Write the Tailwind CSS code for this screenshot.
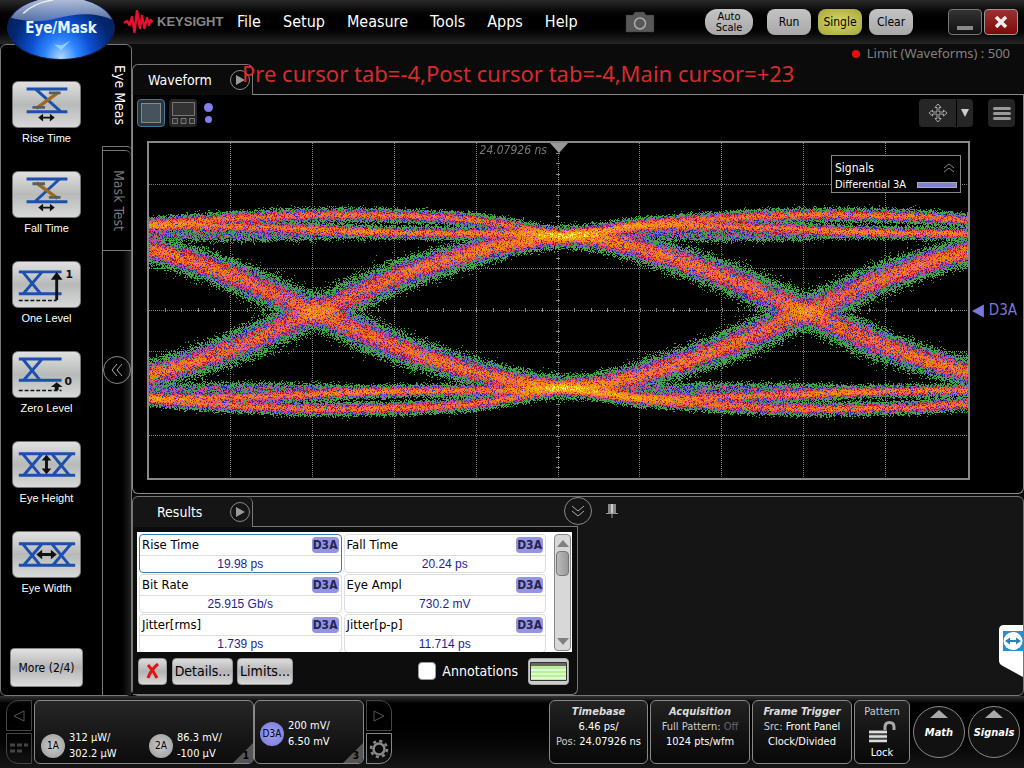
<!DOCTYPE html>
<html lang="en">
<head>
<meta charset="utf-8">
<meta name="viewport" content="width=device-width, initial-scale=1">
<title>Keysight Eye/Mask</title>
<script src="https://cdn.jsdelivr.net/npm/@tailwindcss/browser@4"></script>
</head>
<body class="relative flex min-h-screen flex-col overflow-hidden bg-[#0b0b0b] font-['DejaVu_Sans_Condensed','Noto_Sans',sans-serif] text-white">

<!-- Menu bar -->
<header class="flex h-11 shrink-0 items-center bg-linear-to-b from-[#2a2a2a] via-black to-[#262626] pr-1.5 pl-[123px]">
  <svg class="h-6 w-[30px]" viewBox="0 0 30 24" aria-hidden="true"><path d="M1 13L4 11L6.500 15L9 7L11.500 22L14 1L17 18L19 6L21.500 18L24 8L26 15L27.500 10L29.500 12" fill="none" stroke="#e5112f" stroke-width="2.500" stroke-linejoin="round"/></svg>
  <span class="ml-1 w-[76px] font-['Liberation_Sans',sans-serif] text-[13px] font-bold text-[#888]">KEYSIGHT</span>
  <nav class="ml-1 flex gap-[22px] text-base">
    <a href="#">File</a><a href="#">Setup</a><a href="#">Measure</a><a href="#">Tools</a><a href="#">Apps</a><a href="#">Help</a>
  </nav>
  <button class="ml-[47px]" aria-label="Screenshot"><svg class="h-6 w-[30px]" viewBox="0 0 30 24"><path d="M1 5h7l2-3h9l2 3h8v17H1z" fill="#585858" stroke="#333" stroke-dasharray="1 1"/><circle cx="15" cy="13.500" r="5.500" fill="none" stroke="#aaa" stroke-width="1.500"/></svg></button>
  <div class="ml-auto flex items-center text-xs text-black">
    <button class="h-[26px] w-12 rounded-[12px] bg-linear-to-b from-[#c4c4c4] to-[#a8a8a8] text-[11px] leading-[11px]">Auto<br>Scale</button>
    <button class="ml-3.5 h-[26px] w-11 rounded-lg bg-linear-to-b from-[#c4c4c4] to-[#a8a8a8]">Run</button>
    <button class="ml-[7px] h-[26px] w-11 rounded-lg bg-radial from-[#d8d868] to-[#a5a53c]">Single</button>
    <button class="ml-[7px] h-[26px] w-11 rounded-lg bg-linear-to-b from-[#c4c4c4] to-[#a8a8a8]">Clear</button>
    <button aria-label="Minimize" class="ml-[35px] flex h-[26px] w-[34px] items-end justify-center rounded border border-[#777] bg-linear-to-b from-[#333] to-[#111] pb-1"><span class="h-1 w-4 bg-[#888]"></span></button>
    <button aria-label="Close" class="ml-0.5 flex h-[26px] w-[34px] items-center justify-center rounded border border-[#999] bg-linear-to-b from-[#9a3030] to-[#7c0808]"><svg class="h-3 w-3.5" viewBox="0 0 14 12"><path d="M2 1l10 10M12 1L2 11" stroke="#eee" stroke-width="3.500"/></svg></button>
  </div>
</header>

<!-- Mode switch -->
<button class="absolute top-[-4px] left-[7px] z-10 flex h-[64px] w-[108px] items-center justify-center overflow-hidden rounded-[50%] border border-[#10204a] bg-[radial-gradient(ellipse_at_50%_100%,#b8dcff_0%,#2f86ff_22%,#0b4fd0_42%,#04266f_68%,#031c55_100%)] text-[15px] font-bold">
  <svg class="absolute inset-0 h-full w-full" viewBox="0 0 108 64" aria-hidden="true"><defs><linearGradient id="gl" x1="0" y1="0" x2="0" y2="1"><stop offset="0" stop-color="#dfe6f2" stop-opacity=".85"/><stop offset="1" stop-color="#6f85b4" stop-opacity=".75"/></linearGradient></defs><path d="M0 0H108V24C90 15 68 17 50 22C32 27 14 25 0 21z" fill="url(#gl)"/><path d="M15 17C24 8 34 5 46 3" stroke="#fff" stroke-width="1.500" fill="none" opacity=".8"/><path d="M47 49l7 6 10-10-9 5z" fill="#8fd4ff"/></svg>
  <span class="relative text-[#e8f4ff]">Eye/Mask</span>
</button>

<main class="flex flex-1">
  <!-- Measurement sidebar -->
  <aside class="flex w-[132px] shrink-0 rounded-md border border-[#777] bg-black">
    <div class="flex w-[102px] flex-col items-center pt-9 pr-2.5 font-['Liberation_Sans',sans-serif] text-[11px] leading-[14px]">
      <div class="flex flex-1 flex-col gap-[26px]">
        <button class="flex h-16 w-20 flex-col items-center justify-between"><svg class="h-[47px] w-[69px] shrink-0 rounded-md border border-[#777] bg-linear-to-b from-[#e0e0e0] via-[#b8baba] to-[#d8d8d8]" viewBox="0 0 69 46"><path d="M14 7H56M14 30.500H56M23 7L49 30" stroke="#1c4fae" stroke-width="3" fill="none"/><path d="M24 27L46 11" stroke="#9c6a1c" stroke-width="3.500"/><path d="M20 26h13M37 11h12" stroke="#56605c" stroke-width="3"/><path d="M26 36.500l5-4v3h7v-3l5 4-5 4v-3h-7v3z" fill="#111"/></svg><span>Rise Time</span></button>
        <button class="flex h-16 w-20 flex-col items-center justify-between"><svg class="h-[47px] w-[69px] shrink-0 rounded-md border border-[#777] bg-linear-to-b from-[#e0e0e0] via-[#b8baba] to-[#d8d8d8]" viewBox="0 0 69 46"><path d="M14 7H56M14 30.500H56M48 7L23 30" stroke="#1c4fae" stroke-width="3" fill="none"/><path d="M24 11L46 27" stroke="#9c6a1c" stroke-width="3.500"/><path d="M20 12h13M37 26h12" stroke="#56605c" stroke-width="3"/><path d="M26 36.500l5-4v3h7v-3l5 4-5 4v-3h-7v3z" fill="#111"/></svg><span>Fall Time</span></button>
        <button class="flex h-16 w-20 flex-col items-center justify-between"><svg class="h-[47px] w-[69px] shrink-0 rounded-md border border-[#777] bg-linear-to-b from-[#e0e0e0] via-[#b8baba] to-[#d8d8d8]" viewBox="0 0 69 46"><path d="M6 10H50M6 32.500H50M10 10L28 32M30 10L11 32" stroke="#1c4fae" stroke-width="3" fill="none"/><path d="M6 39.500H45" stroke="#111" stroke-width="1.500" stroke-dasharray="4 2"/><path d="M43.500 39V18h-4.500l6-8 6 8h-4.500v21z" fill="#111"/><text x="54" y="16" font-size="11" font-weight="bold" font-family="DejaVu Sans" fill="#111">1</text></svg><span>One Level</span></button>
        <button class="flex h-16 w-20 flex-col items-center justify-between"><svg class="h-[47px] w-[69px] shrink-0 rounded-md border border-[#777] bg-linear-to-b from-[#e0e0e0] via-[#b8baba] to-[#d8d8d8]" viewBox="0 0 69 46"><path d="M6 7H50M6 29H50M10 7L28 29M30 7L11 29" stroke="#1c4fae" stroke-width="3" fill="none"/><path d="M6 39.500H50" stroke="#111" stroke-width="1.500" stroke-dasharray="4 2"/><path d="M43 39V36h-4l6-5 6 5h-4v3z" fill="#111"/><text x="53" y="34" font-size="11" font-weight="bold" font-family="DejaVu Sans" fill="#111">0</text></svg><span>Zero Level</span></button>
        <button class="flex h-16 w-20 flex-col items-center justify-between"><svg class="h-[47px] w-[69px] shrink-0 rounded-md border border-[#777] bg-linear-to-b from-[#e0e0e0] via-[#b8baba] to-[#d8d8d8]" viewBox="0 0 69 46"><path d="M6 12H64M6 34H64M10 12L28 34M30 12L11 34M40 12L58 34M60 12L41 34" stroke="#1c4fae" stroke-width="3" fill="none"/><path d="M34.500 13l5 6h-3.500v8h3.500l-5 6-5-6h3.500v-8h-3.500z" fill="#111"/></svg><span>Eye Height</span></button>
        <button class="flex h-16 w-20 flex-col items-center justify-between"><svg class="h-[47px] w-[69px] shrink-0 rounded-md border border-[#777] bg-linear-to-b from-[#e0e0e0] via-[#b8baba] to-[#d8d8d8]" viewBox="0 0 69 46"><path d="M6 12H64M6 34H64M10 12L28 34M30 12L11 34M40 12L58 34M60 12L41 34" stroke="#1c4fae" stroke-width="3" fill="none"/><path d="M24 23l6-5v3.500h9v-3.500l6 5-6 5v-3.500h-9v3.500z" fill="#111"/></svg><span>Eye Width</span></button>
      </div>
      <button class="mb-2 h-[39px] w-[73px] rounded border border-[#888] bg-linear-to-b from-[#e2e2e2] via-[#b4b4b4] to-[#dcdcdc] font-['DejaVu_Sans_Condensed','Noto_Sans',sans-serif] text-xs text-black">More (2/4)</button>
    </div>
    <div class="flex flex-1 flex-col">
      <button class="flex h-[101px] items-center justify-center text-sm [writing-mode:vertical-rl]"><span class="ml-1.5">Eye Meas</span></button>
      <div class="h-1 rounded-tr border-t border-l border-[#777]"></div>
      <button class="flex h-[101px] items-center justify-center rounded-tr-md border border-r-0 border-[#777] text-sm text-[#777] [writing-mode:vertical-rl]"><span class="ml-1">Mask Test</span></button>
      <div class="flex-1 border-l border-[#777] bg-linear-to-r from-black via-black to-[#222] pt-[105px]">
        <button aria-label="Collapse" class="flex h-7 w-7 items-center justify-center rounded-full border border-[#888]"><svg class="h-4 w-4" viewBox="0 0 16 16"><path d="M8 2L3 8l5 6M13 2L8 8l5 6" fill="none" stroke="#aaa"/></svg></button>
      </div>
    </div>
  </aside>

  <div class="flex min-w-0 flex-1 flex-col">
    <!-- Waveform window -->
    <section class="flex flex-1 flex-col">
      <div class="relative flex h-[51px] items-end">
        <div class="flex h-[31px] w-[121px] items-center justify-between rounded-t-md border border-b-0 border-[#777] bg-[#0b0b0b] pr-0.5 pl-[15px] text-sm"><span>Waveform</span>
          <button aria-label="Waveform options" class="flex h-5 w-5 items-center justify-center rounded-full border border-[#888]"><svg class="h-2.5 w-2.5" viewBox="0 0 10 10"><path d="M1 0l9 5-9 5z" fill="#999"/></svg></button></div>
        <div class="flex-1 self-end border-b border-[#888]"></div>
        <p class="absolute top-[15px] left-[110px] font-['Noto_Sans',sans-serif] text-[22px] leading-7 whitespace-nowrap text-[#d42c2c]">Pre cursor tab=-4,Post cursor tab=-4,Main cursor=+23</p>
        <p class="absolute top-0 right-3.5 flex items-center gap-[7px] font-['Noto_Sans',sans-serif] text-[13px] text-[#808080]"><span class="h-2 w-2 rounded-full bg-[#e60d0d]"></span>Limit (Waveforms) : 500</p>
      </div>
      <div class="flex flex-1 flex-col rounded-b-md border border-t-0 border-[#888] bg-black pb-[13px]">
        <div class="flex h-[46px] items-center pr-2 pb-2.5 pl-1">
          <button aria-label="Single view" class="flex h-7 w-7 items-center justify-center rounded border border-[#3c78a0] bg-[#29363e]"><span class="h-5 w-5 border border-[#888] bg-[#45535c]"></span></button>
          <button aria-label="Split view" class="ml-1 h-7 w-7 rounded bg-[#262626]"><svg viewBox="0 0 28 28"><path d="M3.500 3.500h22v13h-22zM3.500 19.500h5v5h-5zM12 19.500h5v5h-5zM20.500 19.500h5v5h-5z" fill="#333" stroke="#777"/></svg></button>
          <span class="ml-[7px] flex flex-col items-center gap-1"><i class="h-[9px] w-[9px] rounded-full bg-[#8080e8]"></i><i class="h-[7px] w-[7px] rounded-full bg-[#8080e8]"></i></span>
          <button aria-label="Pan" class="ml-auto flex h-7 w-[37px] items-center justify-center rounded-l bg-[#262626]"><svg class="h-5 w-5" viewBox="0 0 20 20"><path d="M10 1l3 3.500h-2v4.500h4.500V7L19 10l-3.500 3v-2H11v4.500h2L10 19l-3-3.500h2V11H4.500v2L1 10l3.500-3v2H9V4.500H7z" fill="#222" stroke="#aaa"/></svg></button>
          <button aria-label="Pan menu" class="ml-px flex h-7 w-4 items-center justify-center rounded-r bg-[#262626]"><svg class="h-2 w-2" viewBox="0 0 8 8"><path d="M0 0h8L4 8z" fill="#ccc"/></svg></button>
          <button aria-label="Menu" class="ml-[15px] flex h-7 w-[27px] flex-col items-center justify-center gap-0.5 rounded bg-[#242424]"><i class="h-[3px] w-[18px] rounded bg-[#999]"></i><i class="h-[3px] w-[18px] rounded bg-[#999]"></i><i class="h-[3px] w-[18px] rounded bg-[#999]"></i></button>
        </div>
        <div class="flex flex-1 pr-1.5 pl-[14px]">
          <div class="relative flex-1 border-2 border-[#888]">
            <svg class="absolute inset-0 h-full w-full" viewBox="0 0 820 336" preserveAspectRatio="none" shape-rendering="crispEdges" aria-hidden="true">
              <g stroke="#868686" stroke-dasharray="1 1"><path d="M81.500 0V336M163.500 0V336M245.500 0V336M327.500 0V336M409.500 0V336M491.500 0V336M573.500 0V336M655.500 0V336M737.500 0V336M0 41.500H820M0 125.500H820M0 167.500H820M0 209.500H820M0 293.500H820"/></g>
              <path d="M16 167.500H820" stroke="#868686" stroke-width="5" stroke-dasharray="1 15.400"/>
              <path d="M409.500 10V336" stroke="#868686" stroke-width="5" stroke-dasharray="1 9.500"/>
            </svg>
            <canvas id="eye" width="820" height="336" class="absolute inset-0 h-full w-full [image-rendering:pixelated]"></canvas>
            <svg class="absolute top-0 left-1/2 h-2.5 w-[18px] -translate-x-1/2" viewBox="0 0 18 10"><path d="M0 0h18l-9 10z" fill="#999"/></svg>
            <span class="absolute top-[-1px] right-[421px] text-xs text-[#777] italic">24.07926 ns</span>
            <div class="absolute top-3 right-[7px] flex h-[38px] w-[130px] flex-col justify-between border border-[#888] bg-black px-[3px] py-0.5 text-[11px]">
              <div class="flex items-center justify-between"><span class="text-xs leading-5">Signals</span><svg class="mr-0.5 h-2.5 w-3" viewBox="0 0 12 10"><path d="M1 5l5-4 5 4M1 9l5-4 5 4" fill="none" stroke="#888"/></svg></div>
              <div class="flex items-center justify-between leading-[14px]"><span>Differential 3A</span><i class="h-1.5 w-10 border border-[#aaa] bg-[#8080d8]"></i></div>
            </div>
          </div>
          <div class="flex w-[47px] items-center pl-0.5 text-[#7878d8]"><svg class="h-3.5 w-3.5" viewBox="0 0 14 14"><path d="M0 7L13 0v14z" fill="#7878e0"/></svg><span class="ml-1 text-[15px]">D3A</span></div>
        </div>
      </div>
    </section>

    <!-- Results window -->
    <section class="relative mt-0.5 flex h-[200px] flex-col rounded-md border border-[#777] bg-[#151515]">
      <div class="flex h-[30px] w-[445px]">
        <div class="flex w-[120px] items-center justify-between rounded-tr-md border-r border-[#777] pr-0.5 pl-6 text-sm"><span>Results</span>
          <button aria-label="Results options" class="flex h-5 w-5 items-center justify-center rounded-full border border-[#888]"><svg class="h-2.5 w-2.5" viewBox="0 0 10 10"><path d="M1 0l9 5-9 5z" fill="#999"/></svg></button></div>
        <div class="flex-1 border-b border-[#777]"></div>
      </div>
      <button aria-label="Collapse results" class="absolute top-0 left-[431px] flex h-7 w-7 items-center justify-center rounded-full border border-[#888]"><svg class="h-4 w-4" viewBox="0 0 16 16"><path d="M2 3l6 5 6-5M2 8l6 5 6-5" fill="none" stroke="#aaa"/></svg></button>
      <button aria-label="Pin" class="absolute top-[7px] left-[473px]"><svg class="h-3.5 w-3" viewBox="0 0 12 14"><path d="M2 0h8v9H2z" fill="#888"/><path d="M5 0h2v9H5z" fill="#ccc"/><path d="M0 9.500h12M6 10v4" stroke="#999" fill="none"/></svg></button>

      <div class="flex w-[445px] flex-1 flex-col rounded-br-md border-r border-b border-[#777] bg-[#0d0d0d] pt-[5px] pl-1">
        <div class="flex h-[120px] w-[435px] bg-white pt-0.5 pl-0.5 text-black">
          <div class="grid h-[118px] w-[407px] auto-rows-[39px] grid-cols-2 gap-x-0.5 gap-y-px overflow-hidden text-[13px]">
            <div class="flex flex-col rounded border border-[#3a7ea8]"><div class="flex h-[21px] items-center justify-between border-b border-[#ddd] px-0.5"><span>Rise Time</span><b class="rounded bg-[#9494e0] px-px text-[12px] leading-4 text-[#26264e]">D3A</b></div><span class="text-center font-['Liberation_Sans',sans-serif] text-xs leading-4 text-[#1e1e96]">19.98 ps</span></div>
            <div class="flex flex-col rounded border border-[#ddd]"><div class="flex h-[21px] items-center justify-between border-b border-[#ddd] px-0.5"><span>Fall Time</span><b class="rounded bg-[#9494e0] px-px text-[12px] leading-4 text-[#26264e]">D3A</b></div><span class="text-center font-['Liberation_Sans',sans-serif] text-xs leading-4 text-[#1e1e96]">20.24 ps</span></div>
            <div class="flex flex-col rounded border border-[#ddd]"><div class="flex h-[21px] items-center justify-between border-b border-[#ddd] px-0.5"><span>Bit Rate</span><b class="rounded bg-[#9494e0] px-px text-[12px] leading-4 text-[#26264e]">D3A</b></div><span class="text-center font-['Liberation_Sans',sans-serif] text-xs leading-4 text-[#1e1e96]">25.915 Gb/s</span></div>
            <div class="flex flex-col rounded border border-[#ddd]"><div class="flex h-[21px] items-center justify-between border-b border-[#ddd] px-0.5"><span>Eye Ampl</span><b class="rounded bg-[#9494e0] px-px text-[12px] leading-4 text-[#26264e]">D3A</b></div><span class="text-center font-['Liberation_Sans',sans-serif] text-xs leading-4 text-[#1e1e96]">730.2 mV</span></div>
            <div class="flex flex-col rounded border border-[#ddd]"><div class="flex h-[21px] items-center justify-between border-b border-[#ddd] px-0.5"><span>Jitter[rms]</span><b class="rounded bg-[#9494e0] px-px text-[12px] leading-4 text-[#26264e]">D3A</b></div><span class="text-center font-['Liberation_Sans',sans-serif] text-xs leading-4 text-[#1e1e96]">1.739 ps</span></div>
            <div class="flex flex-col rounded border border-[#ddd]"><div class="flex h-[21px] items-center justify-between border-b border-[#ddd] px-0.5"><span>Jitter[p-p]</span><b class="rounded bg-[#9494e0] px-px text-[12px] leading-4 text-[#26264e]">D3A</b></div><span class="text-center font-['Liberation_Sans',sans-serif] text-xs leading-4 text-[#1e1e96]">11.714 ps</span></div>
          </div>
          <div class="ml-2 flex h-[117px] w-[17px] flex-col items-center rounded border border-[#888] bg-[#d8d8d8] py-1"><svg class="h-2 w-3" viewBox="0 0 12 8"><path d="M0 8L6 1l6 7z" fill="#808080"/></svg><i class="mt-1 h-[25px] w-[13px] rounded border border-[#777] bg-linear-to-r from-[#bbb] to-[#999]"></i><svg class="mt-auto h-2 w-3" viewBox="0 0 12 8"><path d="M0 0h12L6 7z" fill="#808080"/></svg></div>
        </div>
        <div class="flex flex-1 items-center pr-2 pb-1 pl-px text-sm">
          <button aria-label="Delete" class="flex h-[27px] w-[29px] items-center justify-center rounded border border-[#999] bg-linear-to-b from-[#ddd] via-[#b4b4b4] to-[#d8d8d8]"><svg class="h-4 w-3.5" viewBox="0 0 14 16"><path d="M2 2c3 3 6 7 9 13M12 1C7 5 4 9 2 15" fill="none" stroke="#e01414" stroke-width="3"/></svg></button>
          <button class="ml-[5px] h-[27px] w-[61px] rounded border border-[#999] bg-linear-to-b from-[#ddd] via-[#b4b4b4] to-[#d8d8d8] text-black">Details...</button>
          <button class="ml-1 h-[27px] w-14 rounded border border-[#999] bg-linear-to-b from-[#ddd] via-[#b4b4b4] to-[#d8d8d8] text-black">Limits...</button>
          <label class="ml-auto flex items-center gap-1.5"><input type="checkbox" class="h-[18px] w-[18px] appearance-none rounded-sm border border-[#999] bg-white">Annotations</label>
          <button aria-label="Display layout" class="ml-2.5 h-[27px] w-[41px] rounded border border-[#aaa] bg-[#ccc] px-px pt-[3px]"><svg viewBox="0 0 37 21"><path d="M.5 .500h36v18H.5z" fill="#b8f09a" stroke="#333"/><path d="M1 1h35v3H1z" fill="#666"/><path d="M1 8h35M1 12h35M1 16h35" stroke="#eeffdd" stroke-width="1.500"/></svg></button>
        </div>
      </div>
      <button aria-label="TeamViewer" class="absolute right-0 bottom-[18px]"><svg class="h-[52px] w-6" viewBox="0 0 24 52"><path d="M5 0h19v52L2 40Q0 38 0 36V5Q0 0 5 0z" fill="#fff"/><path d="M4 6h20v20H4z" fill="#2a8ec8"/><ellipse cx="14" cy="16" rx="9.500" ry="9" fill="#fff"/><path d="M6 16l5-3.500v2.500h6v-2.500l5 3.500-5 3.500v-2.500h-6v2.500z" fill="#2a80b8"/></svg></button>
    </section>
  </div>
</main>

<!-- Status bar -->
<footer class="flex h-[72px] shrink-0 bg-linear-to-b from-[#333] via-black via-15% to-[#161616] pt-1 pr-1 pb-1 pl-1.5 text-[11px]">
  <div class="flex h-16 w-[26px] flex-col gap-0.5">
    <button aria-label="Previous" class="flex flex-1 items-center justify-center rounded-tl-xl border border-[#444]"><svg class="h-3 w-3" viewBox="0 0 12 12"><path d="M11 1v10L1 6z" fill="none" stroke="#555"/></svg></button>
    <button aria-label="Channels" class="flex flex-1 items-center justify-center rounded-bl-xl border border-[#444]"><svg class="h-3 w-5" viewBox="0 0 20 12"><path d="M1 2h18M1 8h12" stroke="#444" stroke-width="3" stroke-dasharray="5 2"/></svg></button>
  </div>
  <div class="relative ml-0.5 flex h-16 w-[220px] items-end overflow-hidden rounded-md border border-[#888] bg-linear-to-b from-[#262626] to-[#0c0c0c] pb-px pl-1.5">
    <button class="flex w-[108px] items-center gap-1 text-left leading-4"><i class="flex h-6 w-6 items-center justify-center rounded-full bg-radial from-[#ccc] to-[#999] text-[10px] text-black not-italic">1A</i><span>312 µW/<br>302.2 µW</span></button>
    <button class="flex items-center gap-1 text-left leading-4"><i class="flex h-6 w-6 items-center justify-center rounded-full bg-radial from-[#ccc] to-[#999] text-[10px] text-black not-italic">2A</i><span>86.3 mV/<br>-100 µV</span></button>
    <svg class="absolute right-0 bottom-0 h-5 w-5" viewBox="0 0 20 20"><path d="M20 0v20H0z" fill="#555"/></svg><b class="absolute right-1 bottom-0 text-[10px] text-black">1</b>
  </div>
  <div class="relative flex h-16 w-[110px] items-center overflow-hidden rounded-md border border-[#888] bg-linear-to-b from-[#262626] to-[#0c0c0c] pt-1 pl-[5px]">
    <button class="flex items-center gap-1 text-left leading-4"><i class="flex h-6 w-6 items-center justify-center rounded-full bg-radial from-[#a0a0f0] to-[#7878d8] text-[10px] text-black not-italic">D3A</i><span>200 mV/<br>6.50 mV</span></button>
    <svg class="absolute right-0 bottom-0 h-5 w-5" viewBox="0 0 20 20"><path d="M20 0v20H0z" fill="#555"/></svg><b class="absolute right-1 bottom-0 text-[10px] text-black">3</b>
  </div>
  <div class="ml-0.5 flex h-16 w-[26px] flex-col gap-0.5">
    <button aria-label="Next" class="flex flex-1 items-center justify-center rounded-tr-xl border border-[#444]"><svg class="h-3 w-3" viewBox="0 0 12 12"><path d="M1 1v10L11 6z" fill="none" stroke="#555"/></svg></button>
    <button aria-label="Settings" class="flex flex-1 items-center justify-center rounded-br-xl border border-[#888]"><svg class="h-5 w-5" viewBox="0 0 20 20"><circle cx="10" cy="10" r="5.500" fill="none" stroke="#888" stroke-width="2.500"/><circle cx="10" cy="10" r="8" fill="none" stroke="#888" stroke-width="2.500" stroke-dasharray="3.100 3.180"/></svg></button>
  </div>
  <div class="ml-auto flex h-16 gap-0.5 text-center leading-[15px]">
    <button class="flex w-[99px] flex-col items-center rounded-md border border-[#888] bg-linear-to-b from-[#222] to-[#080808] pt-[3px]"><b class="text-[#ddd] italic">Timebase</b><span>6.46 ps/</span><span><span class="text-[#ccc]">Pos:</span> 24.07926 ns</span></button>
    <button class="flex w-[100px] flex-col items-center rounded-md border border-[#888] bg-linear-to-b from-[#222] to-[#080808] pt-[3px]"><b class="text-[#ddd] italic">Acquisition</b><span class="text-[#ccc]">Full Pattern: <span class="text-[#666]">Off</span></span><span>1024 pts/wfm</span></button>
    <button class="flex w-[100px] flex-col items-center rounded-md border border-[#888] bg-linear-to-b from-[#222] to-[#080808] pt-[3px]"><b class="text-[#ddd] italic">Frame Trigger</b><span><span class="text-[#ccc]">Src:</span> Front Panel</span><span>Clock/Divided</span></button>
    <button class="flex w-14 flex-col items-center justify-between rounded-md border border-[#888] bg-linear-to-b from-[#222] to-[#080808] py-[3px]"><span class="text-[#ccc]">Pattern</span><svg class="h-[22px] w-7" viewBox="0 0 28 22"><path d="M1 9h18v12H1z" fill="#888" opacity=".4"/><path d="M1 11h18M1 15.500h18M1 20h18" stroke="#ddd" stroke-width="2.500"/><path d="M17 9V6q0-4.500 4.500-4.500T26 6v3" fill="none" stroke="#aaa" stroke-width="3"/></svg><span>Lock</span></button>
    <div class="flex items-center gap-[3px] pl-px font-bold italic">
      <button class="flex h-[52px] w-[52px] flex-col items-center gap-[7px] rounded-full border border-[#888] bg-[#111] pt-[3px]"><svg class="h-2 w-[18px]" viewBox="0 0 18 8"><path d="M9 0l9 8H0z" fill="#aaa"/></svg>Math</button>
      <button class="flex h-[52px] w-[52px] flex-col items-center gap-[7px] rounded-full border border-[#888] bg-[#111] pt-[3px]"><svg class="h-2 w-[18px]" viewBox="0 0 18 8"><path d="M9 0l9 8H0z" fill="#aaa"/></svg>Signals</button>
    </div>
  </div>
</footer>

<script>
// Eye diagram: colour-graded hit density of the traces, one sample per pixel.
(function () {
  const cv = document.getElementById('eye'), W = cv.width, H = cv.height, UI = 491, MID = 169, NODE = -82;
  const ctx = cv.getContext('2d'), img = ctx.createImageData(W, H);
  let seed = 20240611;
  const rnd = () => { seed = (seed + 0x6D2B79F5) | 0; let t = Math.imul(seed ^ seed >>> 15, 1 | seed); t = t + Math.imul(t ^ t >>> 7, 61 | t) ^ t; return ((t ^ t >>> 14) >>> 0) / 4294967296; };
  const poisson = l => {
    if (l > 40) { const g = Math.sqrt(-2 * Math.log(1 - rnd())) * Math.cos(6.2832 * rnd()); return Math.max(0, Math.round(l + g * Math.sqrt(l))); }
    const L = Math.exp(-l); let k = 0, p = rnd(); while (p > L) { k++; p *= rnd(); } return k;
  };
  const interp = (pts, x) => {
    let i = 0; while (i < pts.length - 2 && x > pts[i + 1][0]) i++;
    const a = pts[Math.max(0, i - 1)], b = pts[i], c = pts[i + 1], d = pts[Math.min(pts.length - 1, i + 2)];
    const h = c[0] - b[0], t = (x - b[0]) / h, m1 = (c[1] - a[1]) / (c[0] - a[0]) * h, m2 = (d[1] - b[1]) / (d[0] - b[0]) * h;
    const t2 = t * t, t3 = t2 * t;
    return (2 * t3 - 3 * t2 + 1) * b[1] + (t3 - 2 * t2 + t) * m1 + (3 * t2 - 2 * t3) * c[1] + (t3 - t2) * m2;
  };
  // Height above the middle line against the distance from the last node.
  const fall = [[0, 76], [40, 73], [82, 64], [164, 37], [248, 0], [333, -37], [410, -61], [450, -70], [491, -76]];
  const railA = [[0, 76], [40, 82], [82, 88], [150, 93], [230, 97], [320, 97], [400, 93], [443, 87], [491, 77]];
  const railB = [[0, 76], [40, 80], [82, 86], [150, 86], [230, 84], [320, 80], [400, 79], [443, 79], [491, 77]];
  const railC = [[0, 76], [40, 77], [82, 78], [160, 77], [240, 78], [300, 80], [400, 80], [491, 77]];
  const palette = [[2, 62, 168, 66], [3, 92, 146, 112], [5, 44, 48, 172], [7, 156, 74, 184], [9, 218, 70, 130], [12, 184, 22, 40], [17, 236, 88, 66], [31, 240, 132, 26], [50, 240, 166, 10], [74, 246, 204, 20], [1e9, 255, 244, 110]];
  for (let x = 0; x < W; x++) {
    const dx = (((x - NODE) % UI) + UI) % UI, tr = [];
    const f = interp(fall, dx), slope = (interp(fall, Math.min(UI, dx + 4)) - interp(fall, Math.max(0, dx - 4))) / 8;
    const sf = Math.hypot(4.2, slope * 13);
    for (const s of [1, -1]) {
      tr.push([MID - s * f, sf, 2.6]);
      tr.push([MID - s * interp(railA, dx), 2.8, 1.15]);
      tr.push([MID - s * interp(railB, dx), 2.5, 1.1]);
      tr.push([MID - s * interp(railC, dx), 2.8, dx < 320 ? .35 : .1]);
    }
    for (let y = 0; y < H; y++) {
      let l = 0;
      for (const [c, s, w] of tr) { const z = (y - c) / s; if (z * z < 20) l += w / s * Math.exp(-z * z / 2); }
      const n = poisson(l * 42 * (0.3 + 1.4 * rnd()));
      if (!n) continue;
      const p = palette.find(q => n <= q[0]), o = (y * W + x) * 4;
      img.data[o] = p[1]; img.data[o + 1] = p[2]; img.data[o + 2] = p[3]; img.data[o + 3] = 255;
    }
  }
  ctx.putImageData(img, 0, 0);
})();
</script>
</body>
</html>
